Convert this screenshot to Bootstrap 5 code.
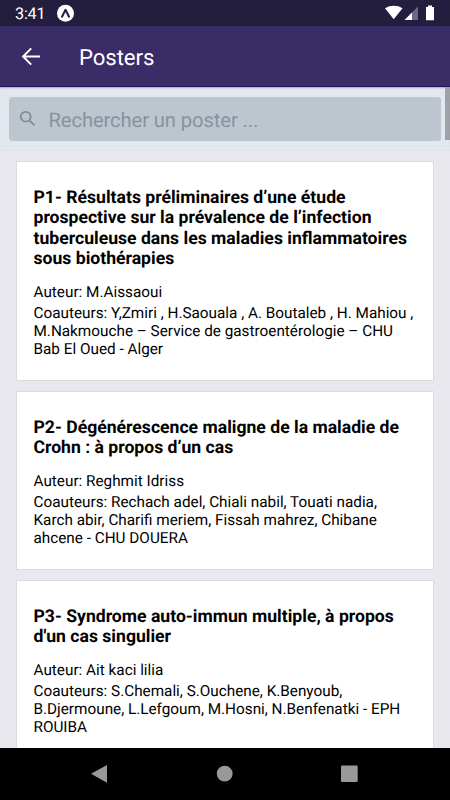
<!DOCTYPE html>
<html lang="fr">
<head>
<meta charset="utf-8">
<meta name="viewport" content="width=device-width, initial-scale=1">
<title>Posters</title>
<link href="https://cdn.jsdelivr.net/npm/bootstrap@5.3.0/dist/css/bootstrap.min.css" rel="stylesheet">
<style>
body{font-family:Roboto,sans-serif;color:#000;background:#e9e8ee;text-rendering:geometricPrecision}
.screen{height:800px}
.status{height:26px;background:#241e3e;padding:0 15px}
.clock{font-size:16.2px;line-height:26px;width:42px;padding-top:2px;letter-spacing:-.2px}
.appbar{height:61px;background:#3a2d67;border-bottom:1px solid #24106a;padding-left:18px}
.appbar h1{font-size:22.2px;font-weight:400;line-height:30px;margin-left:35px;margin-top:3px;letter-spacing:-.1px}
.searchbar{height:64px;background:#e1e8ee;border-bottom:1px solid #e1e1e1;padding:10px 9px 0;box-shadow:inset 0 2px 2px -1px #aab}
.field{height:44px;background:#bdc6cf;border-radius:3px;color:#86939e;padding-left:9px}
.field span{font-size:20.2px;margin-left:10.500px;line-height:30px;padding-top:2px;letter-spacing:-.1px}
.thumb{top:87px;right:0;width:5px;height:53px;background:#9fa3a8}
.posters{padding:10px 16px 0;gap:10.2px}
.poster{border:1px solid #dcdce0;border-radius:0;padding:26px 0 22px 16.5px;color:#000;white-space:nowrap}
.poster h2{font-size:17.6px;font-weight:700;line-height:20.4px;margin-bottom:13px}
.poster p{font-size:15.3px;line-height:18px;font-weight:400;margin-bottom:3px}
.poster p:last-child{margin-bottom:0}
.navkeys{height:52px;background:#000}
</style>
<script src="https://cdn.jsdelivr.net/npm/bootstrap@5.3.0/dist/js/bootstrap.bundle.min.js"></script>
</head>
<body>
<div class="screen d-flex flex-column overflow-hidden position-relative">
  <div class="status d-flex align-items-center text-white flex-shrink-0">
    <span class="clock">3:41</span>
    <svg width="18" height="18" viewBox="0 0 18 18"><circle cx="8.5" cy="9.3" r="8.5" fill="#fff"/><path d="M5 12.7 8.5 5.8 12 12.7" fill="none" stroke="#241e3e" stroke-width="2" stroke-linecap="round" stroke-linejoin="round"/></svg>
    <svg class="ms-auto" width="50" height="16" viewBox="385 5 50 16"><path d="M385 8.2C390 4.9 397.500 4.900 402.500 8.200L393.700 19.300Z" fill="#fff"/><path d="M418 6.500V20H404.500Z" fill="#6d6983"/><path d="M412 12.500V20H404.500Z" fill="#fff"/><path d="M426 7h2V5.500h4V7h2V20.300h-8Z" fill="#fff"/></svg>
  </div>
  <header class="appbar d-flex align-items-center text-white flex-shrink-0">
    <svg width="26" height="26" viewBox="0 0 26 26" fill="none" stroke="#fff" stroke-width="2"><path d="M22 13.500H5M13.200 5.400 5.100 13.500l8.100 8.100"/></svg>
    <h1 class="mb-0">Posters</h1>
  </header>
  <div class="searchbar flex-shrink-0">
    <div class="field d-flex align-items-center" role="search">
      <svg width="20" height="20" viewBox="0 0 20 20" fill="none" stroke="#7f8c97" stroke-width="1.800"><circle cx="7.700" cy="7.700" r="4.900"/><path d="m11.200 11.200 5.200 5.200"/></svg>
      <span>Rechercher un poster ...</span>
    </div>
  </div>
  <div class="thumb position-absolute"></div>
  <main class="posters d-flex flex-column flex-grow-1 overflow-hidden">
    <article class="poster card flex-shrink-0">
      <h2>P1- Résultats préliminaires d’une étude<br>prospective sur la prévalence de l’infection<br>tuberculeuse dans les maladies inflammatoires<br>sous biothérapies</h2>
      <p>Auteur: M.Aissaoui</p>
      <p>Coauteurs: Y,Zmiri , H.Saouala , A. Boutaleb , H. Mahiou ,<br>M.Nakmouche – Service de gastroentérologie – CHU<br>Bab El Oued - Alger</p>
    </article>
    <article class="poster card flex-shrink-0">
      <h2>P2- Dégénérescence maligne de la maladie de<br>Crohn : à propos d’un cas</h2>
      <p>Auteur: Reghmit Idriss</p>
      <p>Coauteurs: Rechach adel, Chiali nabil, Touati nadia,<br>Karch abir, Charifi meriem, Fissah mahrez, Chibane<br>ahcene - CHU DOUERA</p>
    </article>
    <article class="poster card flex-shrink-0">
      <h2>P3- Syndrome auto-immun multiple, à propos<br>d'un cas singulier</h2>
      <p>Auteur: Ait kaci lilia</p>
      <p>Coauteurs: S.Chemali, S.Ouchene, K.Benyoub,<br>B.Djermoune, L.Lefgoum, M.Hosni, N.Benfenatki - EPH<br>ROUIBA</p>
    </article>
  </main>
  <nav class="navkeys d-flex flex-shrink-0">
    <svg width="450" height="52" viewBox="0 748 450 52" fill="#999"><path d="M91 773.700 107 765v17.700Z"/><circle cx="224.700" cy="773.700" r="7.900"/><rect x="341" y="765.500" width="16.700" height="16.500" rx="1"/></svg>
  </nav>
</div>
</body>
</html>
